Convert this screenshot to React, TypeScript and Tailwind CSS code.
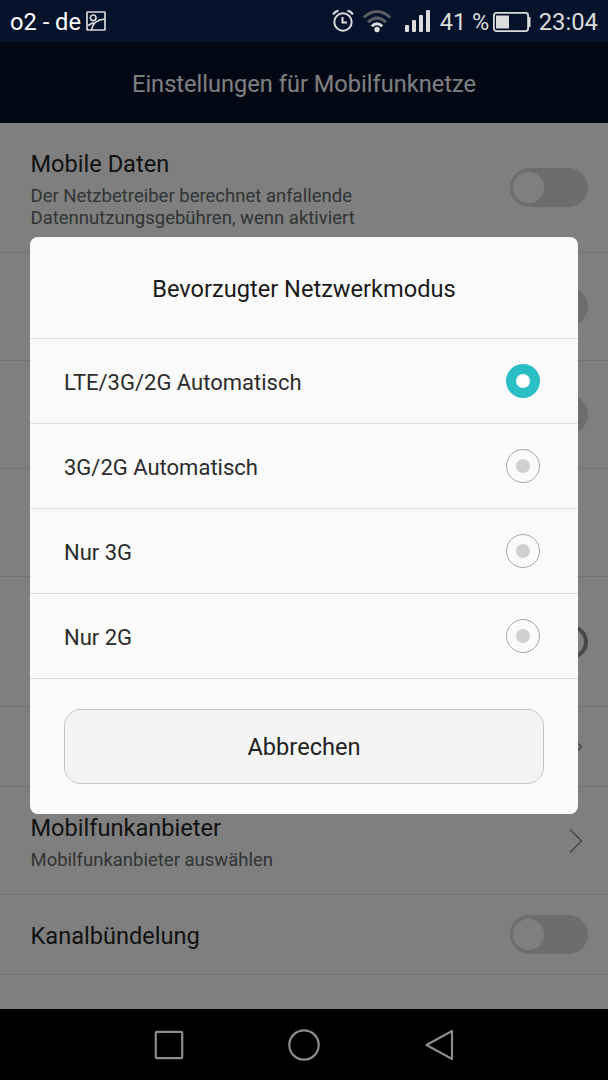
import { useState } from 'react';
import type { ReactNode } from 'react';
import clsx from 'clsx';

const modes = ['LTE/3G/2G Automatisch', '3G/2G Automatisch', 'Nur 3G', 'Nur 2G'];

function StatusBar() {
  return (
    <header className="flex h-[42px] shrink-0 items-center bg-[#04122b] pl-[10px] pr-[10px] text-[23.5px] text-[#dcdcdc]">
      <span className="pt-[3px] text-[23.7px] text-white">o2 - de</span>
      <svg className="ml-[5px]" width="20" height="20" viewBox="0 0 20 20" fill="none" stroke="#d8d8d8" strokeWidth="1.7">
        <rect x="1" y="1" width="18" height="18" rx="0.5" />
        <circle cx="7.200" cy="6.800" r="2.800" />
        <path d="M5.500 19C6.500 13 11 8.600 19 8M2 14.500l5.500-3" />
      </svg>

      <div className="ml-auto flex items-center">
        {/* Alarm */}
        <svg width="22" height="24" viewBox="0 0 22 24" fill="none" stroke="#dcdcdc" strokeWidth="2">
          <circle cx="11" cy="13" r="8.700" />
          <path d="M10.500 8v5.500h4.500" />
          <path d="M1.200 5.700Q2.500 2.600 6.500 1.800M20.800 5.700Q19.500 2.600 15.500 1.800" />
        </svg>
        {/* Wifi */}
        <svg className="ml-[8px]" width="30" height="24" viewBox="0 0 30 24" fill="none" strokeWidth="3">
          <path d="M1.800 8.500Q15-3.500 28.200 8.500" stroke="#5b5e63" />
          <path d="M6 13.200Q15 4.800 24 13.200" stroke="#5b5e63" />
          <path d="M9.800 17.300Q15 12 20.200 17.300" stroke="#dcdcdc" />
          <circle cx="15" cy="20.500" r="2.700" fill="#dcdcdc" />
        </svg>
        {/* Signal */}
        <svg className="ml-[13px]" width="25" height="22" viewBox="0 0 25 22" fill="#dcdcdc">
          <rect x="0" y="15" width="4" height="7" rx="1" />
          <rect x="7" y="10" width="4" height="12" rx="1" />
          <rect x="14" y="5" width="4" height="17" rx="1" />
          <rect x="21" y="0" width="4" height="22" rx="1" />
        </svg>
        <span className="ml-[10px] pt-[3px]">41 %</span>
        <svg className="ml-[4px] mt-px" width="38" height="20" viewBox="0 0 38 20" fill="none">
          <rect x="0.900" y="0.900" width="34.200" height="18.200" rx="2.500" stroke="#dcdcdc" strokeWidth="1.800" />
          <rect x="3" y="3.500" width="13" height="13" fill="#dcdcdc" />
          <path d="M35.500 5h2v10h-2z" fill="#dcdcdc" />
        </svg>
        <span className="ml-[7.5px] pt-[3px] text-[23.8px]">23:04</span>
      </div>
    </header>
  );
}

function Row({ title, summary, tall, children }: { title?: string; summary?: string; tall?: string; children?: ReactNode }) {
  return (
    <div className={clsx('flex shrink-0 items-center justify-between border-b border-[#e6e6e6] pl-[30.5px] pr-5', tall ?? 'h-[108px]')}>
      <div>
        {title && <div className={clsx('text-[23.6px] leading-7 text-[#242424]', summary ? 'pt-[4px]' : 'pt-[3px]')}>{title}</div>}
        {summary && <div className="mt-[7px] whitespace-pre-line text-[18.5px] leading-[22px] text-[#646868]">{summary}</div>}
      </div>
      {children}
    </div>
  );
}

function Toggle() {
  return (
    <div className="flex h-[39px] w-[78px] items-center rounded-full bg-[#dadada] pl-[3px]">
      <div className="size-[31px] rounded-full bg-white" />
    </div>
  );
}

function Chevron() {
  return (
    <svg className="mr-[5px]" width="14" height="26" viewBox="0 0 14 26" fill="none" stroke="#8c8c8c" strokeWidth="1.500">
      <path d="M1 1.500l11.500 11.500L1 24.500" />
    </svg>
  );
}

function Radio({ checked }: { checked: boolean }) {
  return (
    <span
      className={clsx(
        'flex size-[34px] items-center justify-center rounded-full',
        checked ? 'bg-[#2abfc6]' : 'border border-[#a6a6a6]'
      )}
    >
      <span className={clsx('size-[14px] rounded-full', checked ? 'bg-white' : 'bg-[#cfd0d1]')} />
    </span>
  );
}

function NetworkDialog() {
  const [selected, setSelected] = useState(0);

  return (
    <div className="w-[548px] overflow-hidden rounded-lg bg-[#fafafa]">
      <h2 className="flex h-[101px] items-center justify-center pt-[4px] text-[23.6px] text-[#191919]">Bevorzugter Netzwerkmodus</h2>
      {modes.map((mode, i) => (
        <button
          key={mode}
          onClick={() => setSelected(i)}
          className="flex h-[85px] w-full items-center justify-between border-t border-[#dfdfdf] pl-[34px] pr-[37.6px] text-[22px] text-[#2c2c2c]"
        >
          <span className="pt-[2px]">{mode}</span>
          <Radio checked={i === selected} />
        </button>
      ))}
      <div className="border-t border-[#dfdfdf] px-[34px] pt-[30px] pb-[30px]">
        <button className="h-[75px] w-full rounded-[17px] border border-[#c4c4c4] bg-[#f4f4f4] pt-[2px] text-[23.6px] text-[#222222]">
          Abbrechen
        </button>
      </div>
    </div>
  );
}

export default function App() {
  return (
    <div className="flex h-[1080px] w-[608px] flex-col overflow-hidden bg-black font-['Roboto',sans-serif]">
      <StatusBar />

      <div className="relative flex min-h-0 flex-1 flex-col bg-white">
        <h1 className="flex h-[81px] shrink-0 items-center justify-center bg-[#020e26] pt-[4px] text-[23.6px] text-white">
          Einstellungen für Mobilfunknetze
        </h1>
        <Row
          tall="h-[130px]"
          title="Mobile Daten"
          summary={'Der Netzbetreiber berechnet anfallende\nDatennutzungsgebühren, wenn aktiviert'}
        >
          <Toggle />
        </Row>
        <Row>
          <Toggle />
        </Row>
        <Row>
          <Toggle />
        </Row>
        <Row />
        <Row tall="h-[130px]">
          <div className="size-[34px] rounded-full border-4 border-[#8e9094]" />
        </Row>
        <Row tall="h-[80px]">
          <Chevron />
        </Row>
        <Row title="Mobilfunkanbieter" summary="Mobilfunkanbieter auswählen">
          <Chevron />
        </Row>
        <Row tall="h-[80px]" title="Kanalbündelung">
          <Toggle />
        </Row>

        <div className="absolute inset-0 flex items-start justify-center bg-black/50 pt-[195px]">
          <NetworkDialog />
        </div>
      </div>

      <nav className="flex h-[71px] shrink-0 items-center justify-center gap-[104px] bg-black">
        <svg width="30" height="30" viewBox="0 0 30 30" fill="none" stroke="#8c8c8c" strokeWidth="2.2">
          <rect x="1.800" y="1.800" width="26.400" height="26.400" rx="1" />
        </svg>
        <svg width="32" height="32" viewBox="0 0 32 32" fill="none" stroke="#8c8c8c" strokeWidth="2.2">
          <circle cx="16" cy="16" r="14.700" />
        </svg>
        <svg width="30" height="32" viewBox="0 0 30 32" fill="none" stroke="#8c8c8c" strokeWidth="2.2" strokeLinejoin="round">
          <path d="M28 2v28L2.500 16z" />
        </svg>
      </nav>
    </div>
  );
}
